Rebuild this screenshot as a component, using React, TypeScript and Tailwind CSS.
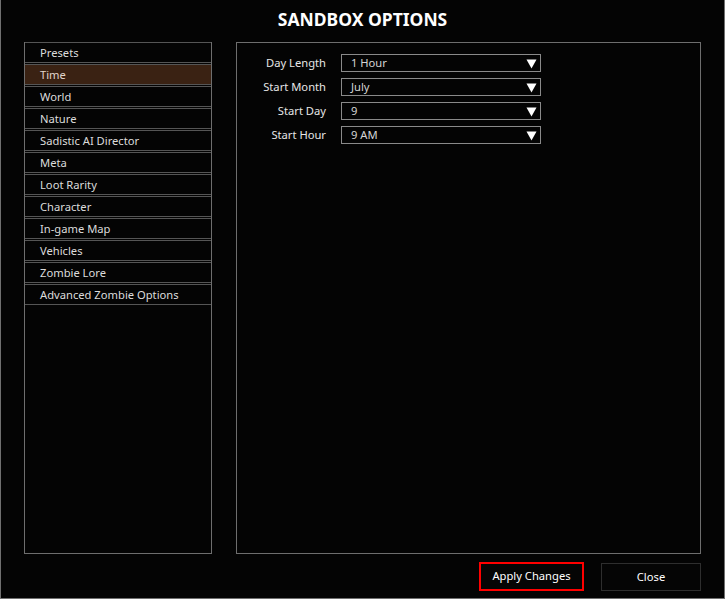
import React from "react";

const items = [
  "Presets",
  "Time",
  "World",
  "Nature",
  "Sadistic AI Director",
  "Meta",
  "Loot Rarity",
  "Character",
  "In-game Map",
  "Vehicles",
  "Zombie Lore",
  "Advanced Zombie Options",
];

const fields = [
  { label: "Day Length", value: "1 Hour" },
  { label: "Start Month", value: "July" },
  { label: "Start Day", value: "9" },
  { label: "Start Hour", value: "9 AM" },
];

export default function App() {
  return (
    <div
      className="w-[725px] h-[599px] bg-[#040404] border-x border-b border-[#707070] flex flex-col text-[#dcdcdc]"
      style={{ fontFamily: '"Noto Sans", "Open Sans", sans-serif' }}
    >
      <div className="h-[42px] flex items-center justify-center pb-[4px]">
        <span className="text-[17.5px] font-bold text-white">SANDBOX OPTIONS</span>
      </div>
      <div className="flex pl-[23px] pr-[23px] gap-[24px] h-[512px]">
        <div className="w-[188px] h-full border-x border-b border-[#6e6e6e] flex flex-col gap-px">
          {items.map((it) => (
            <div
              key={it}
              className={`h-[21px] border-y border-[#555] flex items-center pl-[15px] pt-px text-[11.2px] ${
                it === "Time" ? "bg-[#3a2213] text-[#e2d6cc]" : ""
              }`}
            >
              {it}
            </div>
          ))}
        </div>
        <div className="w-[465px] h-full border border-[#6e6e6e] pt-[11px] flex flex-col gap-[6px]">
          {fields.map((f) => (
            <div key={f.label} className="flex items-center h-[18px]">
              <div className="w-[89px] text-right text-[11.2px] text-[#e6e6e6]">{f.label}</div>
              <div className="ml-[15px] w-[200px] h-[18px] border border-[#8a8a8a] flex items-center justify-between pl-[9px] pr-[3px]">
                <span className="text-[11.2px] text-[#d4d4d4]">{f.value}</span>
                <svg width="11" height="11" viewBox="0 0 11 11">
                  <polygon points="0.5,1.5 10.5,1.5 5.5,10.5" fill="#ffffff" />
                </svg>
              </div>
            </div>
          ))}
        </div>
      </div>
      <div className="flex justify-end items-start pr-[23px] pt-[8px] gap-[17px]">
        <button className="w-[105px] h-[29px] border-2 border-[#ff0000] text-[11.2px] text-white bg-[#050505]">
          Apply Changes
        </button>
        <button className="w-[100px] h-[28px] mt-px border border-[#2e2e2e] text-[11.2px] text-white bg-[#050505]">
          Close
        </button>
      </div>
    </div>
  );
}
